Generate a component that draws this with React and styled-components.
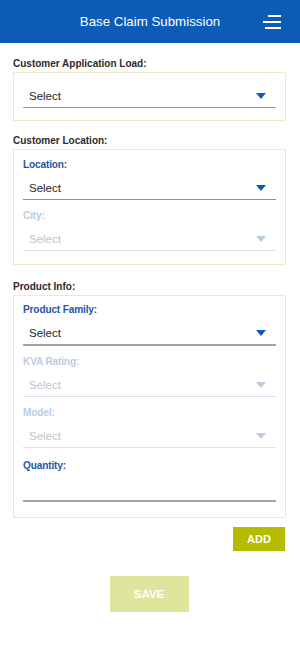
import React from 'react'
import styled, { createGlobalStyle } from 'styled-components'

const Global = createGlobalStyle`
  body {
    margin: 0;
    background: #ffffff;
    font-family: "Liberation Sans", Arial, sans-serif;
  }
`

const Page = styled.div`
  width: 300px;
  min-height: 649px;
  background: #fff;
`

const Header = styled.header`
  height: 43px;
  background: #0b5bb7;
  display: grid;
  grid-template-columns: 1fr auto 1fr;
  align-items: center;
`

const Title = styled.h1`
  grid-column: 2;
  margin: 0;
  color: #fff;
  font-size: 13.3px;
  font-weight: normal;
`

const Burger = styled.button`
  justify-self: end;
  margin-right: 19px;
  width: 18px;
  height: 14px;
  padding: 0;
  border: 0;
  background: none;
  display: flex;
  flex-direction: column;
  align-items: flex-end;
  justify-content: space-between;
`

const Bar = styled.span`
  display: block;
  height: 2px;
  width: ${p => p.w}px;
  background: #fff;
`

const Content = styled.main`
  padding: 0 14px 0 13px;
  display: flex;
  flex-direction: column;
`

const SectionTitle = styled.div`
  margin-top: ${p => p.top}px;
  font-size: 10px;
  font-weight: bold;
  line-height: 12px;
  color: #2b2b2b;
`

const Box = styled.div`
  margin-top: 2px;
  border: 1px solid #ececc4;
  padding: ${p => p.pad};
  display: flex;
  flex-direction: column;
`

const Group = styled.div`
  display: flex;
  flex-direction: column;
  margin-top: ${p => p.top || 0}px;
`

const FieldLabel = styled.div`
  font-size: 10.1px;
  font-weight: bold;
  letter-spacing: -0.15px;
  line-height: 12px;
  color: ${p => (p.disabled ? '#bccbe2' : '#1f57a7')};
  margin-bottom: 6px;
`

const Select = styled.div`
  height: 22px;
  display: flex;
  align-items: center;
  justify-content: space-between;
  padding: 0 10px 0 6px;
  border-bottom: ${p => p.line};
  font-size: 11.5px;
  color: ${p => (p.disabled ? '#bfc3c9' : '#262626')};
`

const Arrow = styled.span`
  width: 0;
  height: 0;
  border-left: 5px solid transparent;
  border-right: 5px solid transparent;
  border-top: 6px solid ${p => (p.disabled ? '#b8cbe4' : '#0b5bb7')};
`

const Input = styled.div`
  height: 22px;
  border-bottom: 2px solid #a4a4a4;
`

const AddRow = styled.div`
  margin-top: 9px;
  display: flex;
  justify-content: flex-end;
  padding-right: 1px;
`

const Button = styled.button`
  border: 0;
  padding: 0;
  color: #fff;
  font-family: inherit;
  font-weight: bold;
  font-size: ${p => p.size}px;
  width: ${p => p.w}px;
  height: ${p => p.h}px;
  background: ${p => p.bg};
`

const SaveRow = styled.div`
  margin-top: 25px;
  display: flex;
  justify-content: center;
  padding-right: 1px;
`

const Dropdown = ({ disabled, line }) => (
  <Select disabled={disabled} line={line}>
    <span>Select</span>
    <Arrow disabled={disabled} />
  </Select>
)

export default function App() {
  return (
    <Page>
      <Global />
      <Header>
        <Title>Base Claim Submission</Title>
        <Burger>
          <Bar w={13} />
          <Bar w={18} />
          <Bar w={16} />
        </Burger>
      </Header>

      <Content>
        <SectionTitle top={15}>Customer Application Load:</SectionTitle>
        <Box pad="12px 9px 12px">
          <Dropdown line="1px solid #9a9a9a" />
        </Box>

        <SectionTitle top={14}>Customer Location:</SectionTitle>
        <Box pad="9px 9px 13px">
          <Group>
            <FieldLabel>Location:</FieldLabel>
            <Dropdown line="1px solid #8e8e8e" />
          </Group>
          <Group top={10}>
            <FieldLabel disabled>City:</FieldLabel>
            <Dropdown disabled line="1px solid #dcdfe3" />
          </Group>
        </Box>

        <SectionTitle top={16}>Product Info:</SectionTitle>
        <Box pad="8px 9px 15px">
          <Group>
            <FieldLabel>Product Family:</FieldLabel>
            <Dropdown line="2px solid #a4a4a4" />
          </Group>
          <Group top={10}>
            <FieldLabel disabled>KVA Rating:</FieldLabel>
            <Dropdown disabled line="1px solid #dcdfe3" />
          </Group>
          <Group top={10}>
            <FieldLabel disabled>Model:</FieldLabel>
            <Dropdown disabled line="1px solid #dcdfe3" />
          </Group>
          <Group top={12}>
            <FieldLabel>Quantity:</FieldLabel>
            <Input />
          </Group>
        </Box>

        <AddRow>
          <Button w={52} h={24} size={11} bg="#b4bb00">ADD</Button>
        </AddRow>
        <SaveRow>
          <Button w={79} h={36} size={11.5} bg="#dfe59c">SAVE</Button>
        </SaveRow>
      </Content>
    </Page>
  )
}
